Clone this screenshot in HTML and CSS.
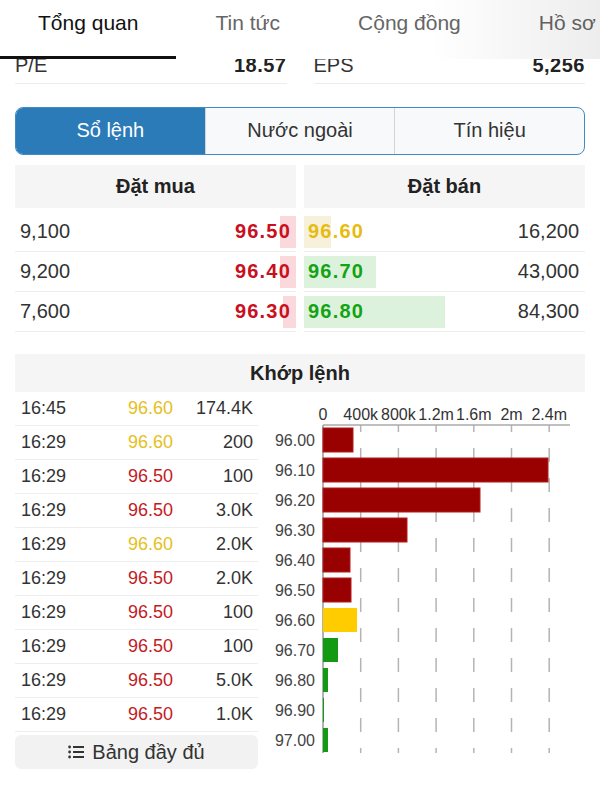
FILE: index.html
```html
<!DOCTYPE html>
<html>
<head>
    <meta charset="utf-8">
    <title>Tổng quan</title>
    <link rel="stylesheet" href="styles.css">
</head>
<body>
    <div class="tabs">
        <div class="tab active">Tổng quan</div>
        <div class="tab">Tin tức</div>
        <div class="tab">Cộng đồng</div>
        <div class="tab">Hồ sơ</div>
        <div class="tabs-fade"></div>
    </div>

    <div class="page">
        <div class="stats">
            <div class="stat"><span>P/E</span><b>18.57</b></div>
            <div class="stat"><span>EPS</span><b>5,256</b></div>
        </div>

        <div class="segment">
            <div class="seg active">Sổ lệnh</div>
            <div class="seg">Nước ngoài</div>
            <div class="seg">Tín hiệu</div>
        </div>

        <div class="book">
            <div class="book-col">
                <div class="book-head">Đặt mua</div>
                <div class="book-row buy" style="background-size: 16px 32px"><span>9,100</span><b class="red">96.50</b></div>
                <div class="book-row buy" style="background-size: 16px 32px"><span>9,200</span><b class="red">96.40</b></div>
                <div class="book-row buy" style="background-size: 13px 32px"><span>7,600</span><b class="red">96.30</b></div>
            </div>
            <div class="book-col">
                <div class="book-head">Đặt bán</div>
                <div class="book-row sell ref" style="background-size: 27px 32px"><b class="yellow">96.60</b><span>16,200</span></div>
                <div class="book-row sell" style="background-size: 72px 32px"><b class="green">96.70</b><span>43,000</span></div>
                <div class="book-row sell" style="background-size: 141px 32px"><b class="green">96.80</b><span>84,300</span></div>
            </div>
        </div>

        <div class="match">
            <div class="match-head">Khớp lệnh</div>
            <div class="match-body">
                <div class="ticks">
                    <div class="tick"><span>16:45</span><span class="yellow">96.60</span><span class="vol">174.4K</span></div>
                    <div class="tick"><span>16:29</span><span class="yellow">96.60</span><span class="vol">200</span></div>
                    <div class="tick"><span>16:29</span><span class="red">96.50</span><span class="vol">100</span></div>
                    <div class="tick"><span>16:29</span><span class="red">96.50</span><span class="vol">3.0K</span></div>
                    <div class="tick"><span>16:29</span><span class="yellow">96.60</span><span class="vol">2.0K</span></div>
                    <div class="tick"><span>16:29</span><span class="red">96.50</span><span class="vol">2.0K</span></div>
                    <div class="tick"><span>16:29</span><span class="red">96.50</span><span class="vol">100</span></div>
                    <div class="tick"><span>16:29</span><span class="red">96.50</span><span class="vol">100</span></div>
                    <div class="tick"><span>16:29</span><span class="red">96.50</span><span class="vol">5.0K</span></div>
                    <div class="tick"><span>16:29</span><span class="red">96.50</span><span class="vol">1.0K</span></div>
                    <div class="full-btn">
                        <svg width="16" height="14" viewBox="0 0 16 14">
                            <circle cx="1.6" cy="2" r="1.4" fill="#333"/>
                            <circle cx="1.6" cy="7" r="1.4" fill="#333"/>
                            <circle cx="1.6" cy="12" r="1.4" fill="#333"/>
                            <path d="M5 2h11M5 7h11M5 12h11" stroke="#333" stroke-width="1.8"/>
                        </svg>
                        Bảng đầy đủ
                    </div>
                </div>

                <svg class="chart" width="330" height="378" viewBox="0 0 330 378">
                    <g class="axis-labels" text-anchor="middle">
                        <text x="53" y="28">0</text>
                        <text x="90.7" y="28">400k</text>
                        <text x="128.4" y="28">800k</text>
                        <text x="166.1" y="28">1.2m</text>
                        <text x="203.8" y="28">1.6m</text>
                        <text x="241.5" y="28">2m</text>
                        <text x="279.2" y="28">2.4m</text>
                    </g>
                    <g stroke="#b4b4b4" stroke-width="1.5" stroke-dasharray="14 16" stroke-dashoffset="7">
                        <line x1="90.7" y1="33" x2="90.7" y2="361"/>
                        <line x1="128.4" y1="33" x2="128.4" y2="361"/>
                        <line x1="166.1" y1="33" x2="166.1" y2="361"/>
                        <line x1="203.8" y1="33" x2="203.8" y2="361"/>
                        <line x1="241.5" y1="33" x2="241.5" y2="361"/>
                        <line x1="279.2" y1="33" x2="279.2" y2="361"/>
                    </g>
                    <line x1="53" y1="33" x2="300" y2="33" stroke="#aaa" stroke-width="1.5"/>
                    <line x1="53" y1="33" x2="53" y2="361" stroke="#999" stroke-width="1.5"/>

                    <g class="bars">
                        <rect class="down" x="53" y="36" width="30" height="24"/>
                        <rect class="down" x="53" y="66" width="225" height="24"/>
                        <rect class="down" x="53" y="96" width="157" height="24"/>
                        <rect class="down" x="53" y="126" width="84" height="24"/>
                        <rect class="down" x="53" y="156" width="27" height="24"/>
                        <rect class="down" x="53" y="186" width="28" height="24"/>
                        <rect class="flat" x="53" y="216" width="34" height="24"/>
                        <rect class="up" x="53" y="246" width="15" height="24"/>
                        <rect class="up" x="53" y="276" width="5" height="24"/>
                        <rect class="up" x="53" y="306" width="1" height="24"/>
                        <rect class="up" x="53" y="336" width="5" height="24"/>
                    </g>

                    <g class="price-labels" text-anchor="end">
                        <text x="45" y="54">96.00</text>
                        <text x="45" y="84">96.10</text>
                        <text x="45" y="114">96.20</text>
                        <text x="45" y="144">96.30</text>
                        <text x="45" y="174">96.40</text>
                        <text x="45" y="204">96.50</text>
                        <text x="45" y="234">96.60</text>
                        <text x="45" y="264">96.70</text>
                        <text x="45" y="294">96.80</text>
                        <text x="45" y="324">96.90</text>
                        <text x="45" y="354">97.00</text>
                    </g>
                </svg>
            </div>
        </div>
    </div>
</body>
</html>
```

FILE: styles.css
```css
html, body {
    overflow-x: hidden;
}
body {
    margin: 0;
    background: #fff;
    color: #333;
    font-family: "Liberation Sans", Arial, sans-serif;
}

/* top tabs */
.tabs {
    position: relative;
    z-index: 1;
    display: flex;
    height: 59px;
    background: #fff;
    white-space: nowrap;
    overflow: hidden;
}
.tab {
    flex: none;
    box-sizing: border-box;
    height: 59px;
    padding: 8px 39px 0;
    font-size: 21px;
    line-height: 30px;
    color: #666;
    border-bottom: 3px solid transparent;
}
.tab.active {
    padding: 8px 38px 0;
    color: #111;
    border-bottom-color: #111;
}
.tabs-fade {
    position: absolute;
    top: 0;
    right: 0;
    width: 170px;
    height: 59px;
    background: linear-gradient(to right, rgba(0, 0, 0, 0), rgba(0, 0, 0, 0.07));
    pointer-events: none;
}

.page {
    padding: 0 15px;
}

/* P/E row */
.stats {
    display: grid;
    grid-template-columns: 1fr 1fr;
    gap: 27px;
    margin-top: -12px;
}
.stat {
    box-sizing: border-box;
    display: flex;
    justify-content: space-between;
    height: 37px;
    line-height: 36px;
    font-size: 20px;
    color: #333;
    border-bottom: 1px solid #ececec;
}
.stat b {
    color: #222;
    letter-spacing: 0.5px;
}

/* segmented control */
.segment {
    box-sizing: border-box;
    display: flex;
    height: 48px;
    margin-top: 23px;
    border: 1.5px solid #3f8bc4;
    border-radius: 8px;
    overflow: hidden;
    background: #f8f9fa;
}
.seg {
    flex: 1;
    text-align: center;
    line-height: 45px;
    font-size: 20px;
    color: #333;
    border-left: 1px solid #d4d4d4;
}
.seg:first-child {
    border-left: none;
}
.seg.active {
    background: #2a7bb8;
    color: #fff;
}

/* order book */
.book {
    display: grid;
    grid-template-columns: 1fr 1fr;
    gap: 8px;
    margin-top: 10px;
}
.book-head {
    height: 43px;
    line-height: 43px;
    margin-bottom: 4px;
    text-align: center;
    font-size: 20px;
    font-weight: bold;
    color: #222;
    background: #f5f5f5;
}
.book-row {
    box-sizing: border-box;
    display: flex;
    justify-content: space-between;
    align-items: center;
    height: 40px;
    font-size: 20px;
    color: #333;
    border-bottom: 1px solid #eeeeee;
    background-repeat: no-repeat;
}
.book-row b {
    letter-spacing: 1.2px;
}
.book-row.buy {
    padding: 0 5px;
    background-image: linear-gradient(#fbd8db, #fbd8db);
    background-position: right center;
}
.book-row.sell {
    padding: 0 6px 0 4px;
    background-image: linear-gradient(#ddf2dd, #ddf2dd);
    background-position: left center;
}
.book-row.sell.ref {
    background-image: linear-gradient(#f7f1dc, #f7f1dc);
}

.red { color: #c8101e; }
.green { color: #13a313; }
.yellow { color: #e8bb10; }

/* matched orders */
.match {
    margin-top: 22px;
}
.match-head {
    height: 38px;
    line-height: 38px;
    text-align: center;
    font-size: 20px;
    font-weight: bold;
    color: #222;
    background: #f5f5f5;
}
.match-body {
    display: flex;
    margin-right: -15px;
}
.ticks {
    width: 243px;
    flex: none;
}
.tick {
    box-sizing: border-box;
    display: grid;
    grid-template-columns: 107px 60px 1fr;
    align-items: center;
    height: 34px;
    padding: 0 5px 0 6px;
    font-size: 18px;
    color: #333;
    border-bottom: 1px solid #eeeeee;
}
.tick .vol {
    text-align: right;
}
.tick .yellow { color: #e6c020; }
.tick .red { color: #c41a24; }

.full-btn {
    display: flex;
    justify-content: center;
    align-items: center;
    gap: 8px;
    height: 34px;
    margin-top: 3px;
    font-size: 20px;
    color: #333;
    background: #f2f2f2;
    border-radius: 6px;
}

/* histogram */
.chart {
    display: block;
    flex: none;
    margin-left: 12px;
    font-family: "Liberation Sans", Arial, sans-serif;
}
.axis-labels {
    font-size: 16px;
    fill: #333;
}
.price-labels {
    font-size: 16px;
    fill: #444;
}
.bars .down {
    fill: #990000;
    stroke: #b51d1d;
    stroke-width: 1;
}
.bars .flat {
    fill: #ffcc00;
}
.bars .up {
    fill: #139a13;
}
```
